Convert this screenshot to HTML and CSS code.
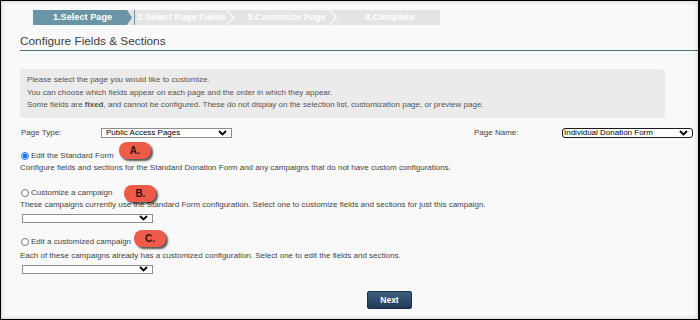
FILE: index.html
```html
<!doctype html>
<html lang="en">
    <head>
        <meta charset="UTF-8" />
        <title>Configure Fields &amp; Sections</title>
        <link rel="stylesheet" href="styles.css">
    </head>
    <body>
        <div class="frame">
            <div class="wizard">
                <div class="step step-active">1.Select Page</div>
                <div class="step step-sep">2.Select Page Fields</div>
                <div class="step step-sep">3.Customize Page</div>
                <div class="step">4.Complete</div>
            </div>

            <h1 class="title">Configure Fields &amp; Sections</h1>

            <div class="info">
                <p>Please select the page you would like to customize.</p>
                <p>You can choose which fields appear on each page and the order in which they appear.</p>
                <p>Some fields are <b>fixed</b>, and cannot be configured. These do not display on the selection list, customization page, or preview page.</p>
            </div>

            <div class="page-row">
                <label class="field-label">Page Type:</label>
                <span class="select-wrap">
                    <select class="select">
                        <option>Public Access Pages</option>
                    </select>
                    <svg class="chevron" width="9" height="6" viewBox="0 0 9 6"><polyline points="1,1 4.5,4.5 8,1" /></svg>
                </span>
                <label class="field-label field-label-name">Page Name:</label>
                <span class="select-wrap select-focus">
                    <select class="select">
                        <option>Individual Donation Form</option>
                    </select>
                    <svg class="chevron" width="9" height="6" viewBox="0 0 9 6"><polyline points="1,1 4.5,4.5 8,1" /></svg>
                </span>
            </div>

            <div class="option option-first">
                <label class="option-head">
                    <input type="radio" name="mode" checked />
                    Edit the Standard Form
                    <span class="badge badge-a">A.</span>
                </label>
                <p class="option-desc">Configure fields and sections for the Standard Donation Form and any campaigns that do not have custom configurations.</p>
            </div>

            <div class="option">
                <label class="option-head">
                    <input type="radio" name="mode" />
                    Customize a campaign
                    <span class="badge badge-b">B.</span>
                </label>
                <p class="option-desc">These campaigns currently use the Standard Form configuration. Select one to customize fields and sections for just this campaign.</p>
                <span class="select-wrap select-campaign">
                    <select class="select"><option></option></select>
                    <svg class="chevron" width="9" height="6" viewBox="0 0 9 6"><polyline points="1,1 4.5,4.5 8,1" /></svg>
                </span>
            </div>

            <div class="option">
                <label class="option-head">
                    <input type="radio" name="mode" />
                    Edit a customized campaign
                    <span class="badge badge-c">C.</span>
                </label>
                <p class="option-desc option-desc-gap">Each of these campaigns already has a customized configuration. Select one to edit the fields and sections.</p>
                <span class="select-wrap select-campaign">
                    <select class="select"><option></option></select>
                    <svg class="chevron" width="9" height="6" viewBox="0 0 9 6"><polyline points="1,1 4.5,4.5 8,1" /></svg>
                </span>
            </div>

            <button class="next-btn">Next</button>
        </div>
    </body>
</html>
```

FILE: styles.css
```css
html,
body {
    margin: 0;
    padding: 0;
}

body {
    font-family: "Liberation Sans", Arial, sans-serif;
    color: #444444;
    background: #ffffff;
}

.frame {
    box-sizing: border-box;
    width: 700px;
    height: 320px;
    border: 1px solid #000000;
    border-right-width: 2px;
    background: #f9f9f9;
    box-shadow: inset 0 0 5px rgba(0, 0, 0, 0.2);
    padding: 9px 0 0 19px;
    overflow: hidden;
}

/* Wizard steps */
.wizard {
    display: flex;
    width: 407px;
    height: 15px;
    margin-left: 13px;
    background: #e4e4e4;
}

.step {
    position: relative;
    box-sizing: border-box;
    height: 15px;
    line-height: 15px;
    font-size: 9.2px;
    font-weight: bold;
    color: #ffffff;
    text-align: center;
    white-space: nowrap;
}

.step:nth-child(1) {
    width: 99px;
}

.step:nth-child(2) {
    width: 98px;
    border-left: 1px solid #6a95a6;
    margin-left: 2px;
    padding-right: 4px;
}

.step:nth-child(3) {
    width: 103px;
    padding-left: 6px;
}

.step:nth-child(4) {
    width: 105px;
    padding-left: 4px;
}

.step-active {
    background: #6a95a6;
    clip-path: polygon(0 0, calc(100% - 5px) 0, 100% 50%, calc(100% - 5px) 100%, 0 100%);
}

.step-sep::after {
    content: "";
    position: absolute;
    right: 0;
    top: 2px;
    width: 10px;
    height: 10px;
    border-top: 1px solid #ffffff;
    border-right: 1px solid #ffffff;
    transform: rotate(45deg);
}

/* Heading */
.title {
    margin: 9px 0 0;
    padding: 0 0 2px;
    font-size: 11.8px;
    line-height: 14px;
    font-weight: normal;
    color: #404040;
    border-bottom: 1.5px solid #4a6f81;
}

/* Info box */
.info {
    width: 645px;
    box-sizing: border-box;
    margin-top: 18px;
    padding: 5px 7px 6px;
    background: #ebebeb;
    border-radius: 3px;
    font-size: 8px;
    line-height: 12.5px;
    color: #555555;
}

.info p {
    margin: 0;
}

/* Page selectors */
.page-row {
    display: flex;
    align-items: center;
    height: 10px;
    margin-top: 10px;
    font-size: 8px;
}

.field-label {
    width: 81px;
    padding-left: 1px;
    box-sizing: border-box;
    color: #444444;
}

.field-label-name {
    width: 89px;
    margin-left: 241px;
}

.select-wrap {
    position: relative;
    display: inline-block;
    width: 131px;
    height: 10px;
}

.select {
    appearance: none;
    -webkit-appearance: none;
    box-sizing: border-box;
    width: 100%;
    height: 100%;
    margin: 0;
    padding: 0 0 0 4px;
    border: 1px solid #8f8f8f;
    border-radius: 0;
    background: #ffffff;
    font-family: "Liberation Sans", Arial, sans-serif;
    font-size: 8px;
    line-height: 8px;
    color: #000000;
}

.select-focus .select {
    padding-left: 1px;
    border: 1.5px solid #1a1a1a;
    border-radius: 3px;
}

.chevron {
    position: absolute;
    right: 5px;
    top: 2px;
    fill: none;
    stroke: #000000;
    stroke-width: 1.8;
}

/* Options */
.option-first {
    margin-top: 12px;
}

.option {
    font-size: 8px;
}

.option + .option {
    margin-top: 13px;
}

.option-head {
    display: flex;
    align-items: center;
    height: 12px;
    padding-left: 1px;
    color: #444444;
}

.option-head input {
    width: 8px;
    height: 8px;
    margin: 0 2px 0 0;
    accent-color: #1a73e8;
}

.option-desc {
    margin: 0;
    line-height: 12px;
    color: #444444;
}

.option-desc-gap {
    margin-top: 2px;
}

.select-campaign {
    display: block;
    width: 131px;
    height: 9px;
    margin: 3px 0 0 2px;
}

.select-campaign .chevron {
    top: 1.5px;
}

/* Annotation callouts */
.badge {
    position: relative;
    display: inline-block;
    width: 32px;
    height: 17px;
    line-height: 17px;
    border-radius: 8px;
    background: #ef5b49;
    box-shadow: 2px 2px 2px rgba(0, 0, 0, 0.65);
    color: #2a1410;
    font-size: 10px;
    font-weight: bold;
    text-align: center;
}

.badge-a {
    margin-left: 5px;
    top: -5px;
}

.badge-b {
    margin-left: 12px;
    top: 1px;
}

.badge-c {
    margin-left: 3px;
    top: -3px;
}

/* Footer button */
.next-btn {
    display: block;
    width: 45px;
    height: 18px;
    margin: 17px 0 0 347px;
    padding: 0;
    border: 1px solid #1b3149;
    border-radius: 2px;
    background: linear-gradient(#3f607f, #1f3a57);
    color: #ffffff;
    font-family: "Liberation Sans", Arial, sans-serif;
    font-size: 8.5px;
    font-weight: bold;
}
```
